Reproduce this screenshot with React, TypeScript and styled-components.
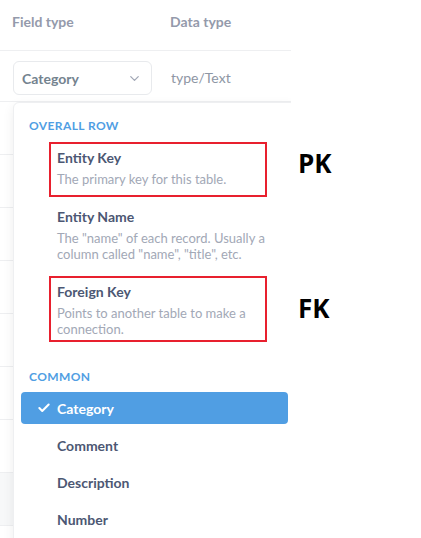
import React from "react";
import styled, { createGlobalStyle } from "styled-components";
import { Check, ChevronDown } from "lucide-react";

const GlobalStyle = createGlobalStyle`
  html, body {
    margin: 0;
    padding: 0;
    background: #fff;
  }
  body {
    font-family: Lato, "Noto Sans", sans-serif;
    -webkit-font-smoothing: antialiased;
  }
`;

const Page = styled.div`
  position: relative;
  width: 421px;
  height: 538px;
  overflow: hidden;
  background: #fff;
`;

const Panel = styled.div`
  position: relative;
  width: 291px;
  height: 538px;
  overflow: hidden;
`;

const HeaderRow = styled.div`
  display: grid;
  grid-template-columns: 158px 1fr;
  align-items: center;
  height: 51px;
  padding-left: 12px;
  padding-bottom: 7px;
  box-sizing: border-box;
  border-bottom: 1px solid #eeeff1;
  color: #949aab;
  font-size: 14px;
  font-weight: 700;
`;

const Row = styled.div<{ $tall?: boolean; $shade?: boolean }>`
  display: grid;
  grid-template-columns: 158px 1fr;
  align-items: center;
  height: ${(p) => (p.$tall ? 51 : 53)}px;
  box-sizing: border-box;
  padding-left: 13px;
  border-bottom: 1px solid #eeeff1;
  background: ${(p) => (p.$shade ? "#f7f8f9" : "#fff")};
`;

const Select = styled.div`
  display: flex;
  align-items: center;
  justify-content: space-between;
  width: 139px;
  height: 34px;
  box-sizing: border-box;
  padding: 0 9px 0 8px;
  border: 1px solid #e8eaed;
  border-radius: 6px;
  color: #74838f;
  font-size: 14px;
  font-weight: 700;
  margin-top: 4px;
  svg {
    color: #a1a7b5;
  }
`;

const DataType = styled.span`
  color: #8e96a4;
  font-size: 14px;
  margin-top: 3px;
`;

const Popover = styled.div`
  position: absolute;
  top: 102px;
  left: 13px;
  width: 283px;
  height: 460px;
  box-sizing: border-box;
  background: #fff;
  border: 1px solid #eeeff1;
  border-radius: 6px;
  box-shadow: 0 4px 12px rgba(0, 0, 0, 0.07);
  padding: 15px 7px 0;
`;

const SectionTitle = styled.div<{ $gap?: number }>`
  margin-top: ${(p) => p.$gap ?? 0}px;
  padding-left: 8px;
  color: #509ee3;
  font-size: 12px;
  font-weight: 700;
  line-height: 15px;
  letter-spacing: 0.4px;
  text-transform: uppercase;
`;

const Described = styled.div<{ $marked?: boolean; $inset?: number }>`
  position: relative;
  padding: 10px 0 11px 36px;
  &::after {
    content: "";
    display: ${(p) => (p.$marked ? "block" : "none")};
    position: absolute;
    top: 3px;
    bottom: ${(p) => p.$inset ?? 0}px;
    left: 28px;
    right: 21px;
    border: 2px solid #e8202e;
  }
`;

const Title = styled.div`
  color: #4c5773;
  font-size: 14px;
  font-weight: 700;
  line-height: 18px;
`;

const Desc = styled.div`
  margin-top: 4px;
  color: #a2a8b6;
  font-size: 13px;
  line-height: 16px;
  width: 210px;
`;

const OverallList = styled.div`
  margin-top: 6px;
`;

const List = styled.div`
  display: flex;
  flex-direction: column;
  gap: 5px;
  margin-top: 8px;
`;

const Option = styled.div<{ $selected?: boolean }>`
  display: flex;
  align-items: center;
  height: 32px;
  padding-left: 16px;
  border-radius: 4px;
  background: ${(p) => (p.$selected ? "#509ee3" : "transparent")};
  color: ${(p) => (p.$selected ? "#fff" : "#4c5773")};
  font-size: 14px;
  font-weight: 700;
`;

const CheckSlot = styled.span`
  display: inline-flex;
  width: 20px;
`;

const Callout = styled.div<{ $top: number }>`
  position: absolute;
  left: 298px;
  top: ${(p) => p.$top}px;
  font-family: "Open Sans", "DejaVu Sans", sans-serif;
  font-size: 26px;
  font-weight: 700;
  color: #000;
  line-height: 1;
`;

const overall = [
  { title: "Entity Key", desc: "The primary key for this table.", marked: true, inset: 1 },
  {
    title: "Entity Name",
    desc: 'The "name" of each record. Usually a column called "name", "title", etc.',
  },
  {
    title: "Foreign Key",
    desc: "Points to another table to make a connection.",
    marked: true,
    inset: 6,
  },
];

const common = ["Category", "Comment", "Description", "Number"];

export default function App() {
  return (
    <Page>
      <GlobalStyle />
      <Panel>
        <HeaderRow>
          <span>Field type</span>
          <span>Data type</span>
        </HeaderRow>
        <Row $tall>
          <Select>
            <span>Category</span>
            <ChevronDown size={15} strokeWidth={2} />
          </Select>
          <DataType>type/Text</DataType>
        </Row>
        {[0, 1, 2, 3, 4, 5, 6].map((i) => (
          <Row key={i} />
        ))}
        <Row $shade />
        <Popover>
          <SectionTitle>Overall Row</SectionTitle>
          <OverallList>
            {overall.map((o) => (
              <Described key={o.title} $marked={o.marked} $inset={o.inset}>
                <Title>{o.title}</Title>
                <Desc>{o.desc}</Desc>
              </Described>
            ))}
          </OverallList>
          <SectionTitle $gap={21}>Common</SectionTitle>
          <List>
            {common.map((c, i) => (
              <Option key={c} $selected={i === 0}>
                <CheckSlot>{i === 0 && <Check size={14} strokeWidth={3.5} />}</CheckSlot>
                {c}
              </Option>
            ))}
          </List>
        </Popover>
      </Panel>
      <Callout $top={150}>PK</Callout>
      <Callout $top={295}>FK</Callout>
    </Page>
  );
}
